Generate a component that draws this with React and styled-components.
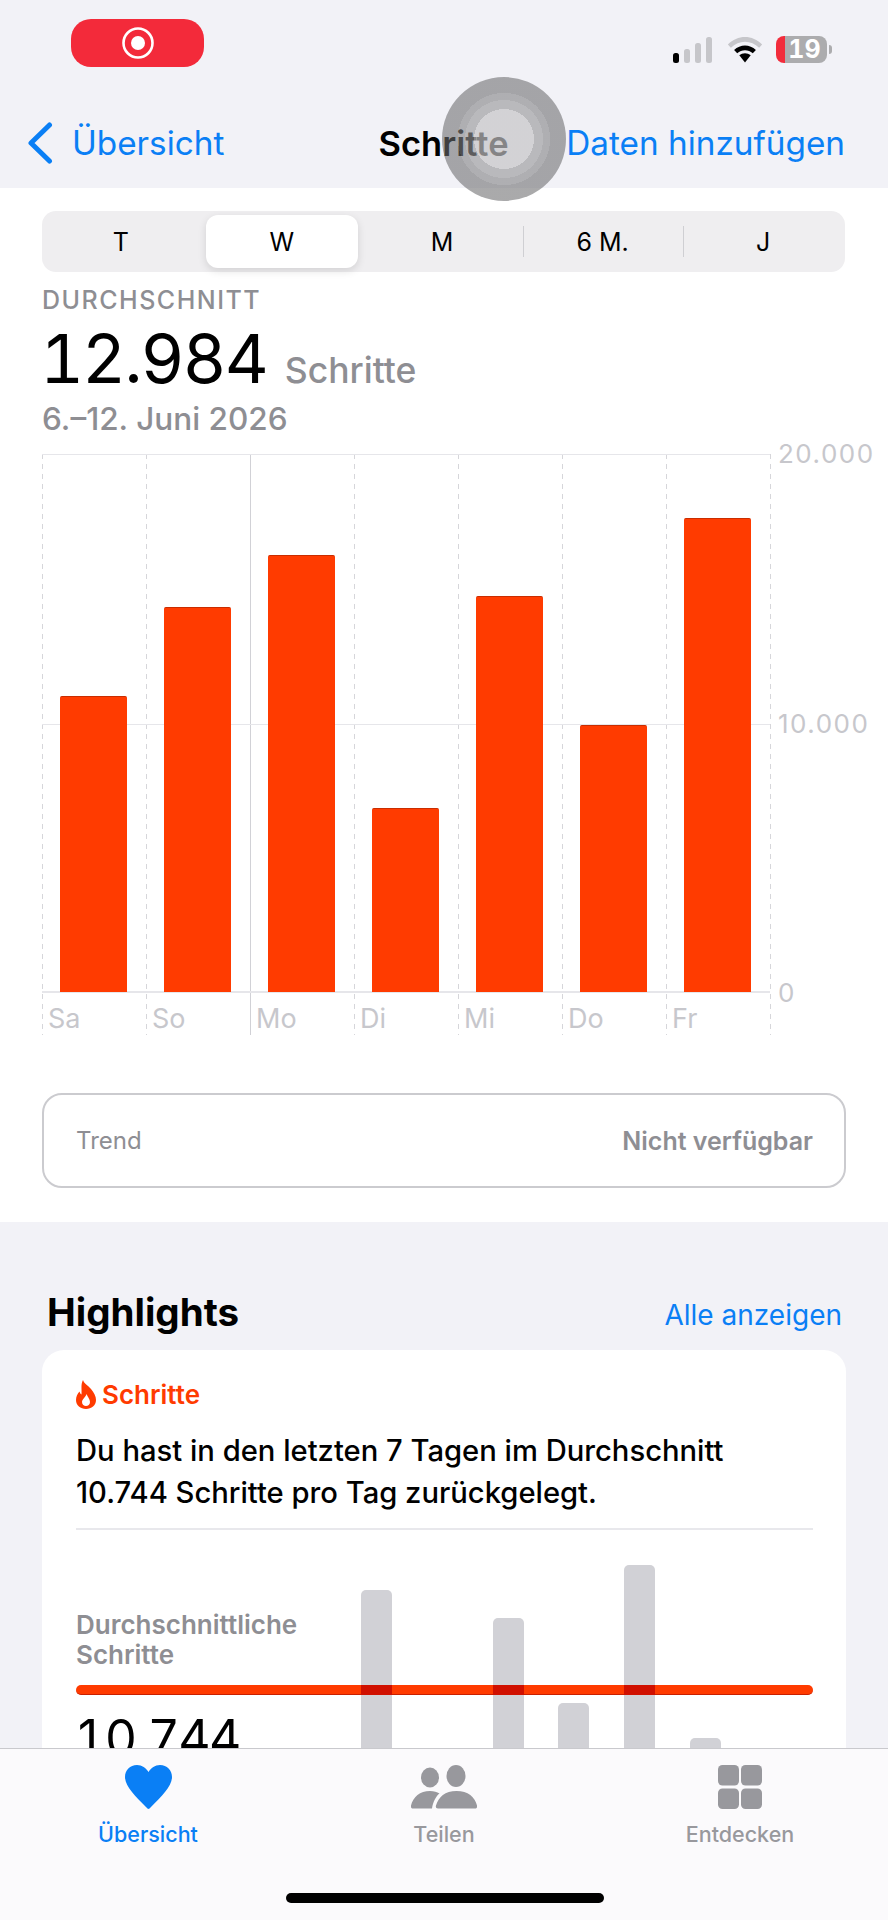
import React from 'react';
import styled, { createGlobalStyle } from 'styled-components';

const Global = createGlobalStyle`
  html, body { margin: 0; padding: 0; background: #f2f2f7; }
  body { font-family: Inter, "Liberation Sans", sans-serif; -webkit-font-smoothing: antialiased; }
`;

const BLUE = '#0a7ff5';
const ORANGE = '#ff3b00';
const GRAY = '#8e8e93';
const AXIS = '#c7c7cc';

const Page = styled.div`
  position: relative;
  width: 888px;
  height: 1920px;
  overflow: hidden;
  background: #f2f2f7;
`;

/* status bar */
const StatusBar = styled.div`
  height: 100px;
  box-sizing: border-box;
  padding: 19px 56px 0 71px;
  display: flex;
  justify-content: space-between;
  align-items: flex-start;
`;
const RecordPill = styled.div`
  width: 133px;
  height: 48px;
  border-radius: 20px;
  background: #f32a3a;
  display: flex;
  align-items: center;
  justify-content: center;
`;
const StatusIcons = styled.div`
  display: flex;
  align-items: flex-end;
  margin-top: 17px;
  height: 27px;
`;
const Signal = styled.div`
  display: flex;
  align-items: flex-end;
  gap: 4.5px;
  margin-right: 15px;
`;
const SignalBar = styled.span`
  width: 6.5px;
  height: ${p => p.$h}px;
  border-radius: 2.5px;
  background: ${p => (p.$on ? '#000' : '#c6c6ca')};
`;
const Battery = styled.div`
  width: 51px;
  height: 27px;
  margin-left: 13px;
  border-radius: 8px;
  background: linear-gradient(to right, #f22c3b 0 9px, #acacae 9px);
  color: #fff;
  font-size: 25px;
  font-weight: 700;
  line-height: 27px;
  text-align: center;
  padding-left: 6px;
  box-sizing: border-box;
  font-feature-settings: 'tnum';
`;
const BatteryNub = styled.span`
  width: 3px;
  height: 9px;
  margin: 0 0 9px 2px;
  border-radius: 0 3px 3px 0;
  background: #acacae;
`;

/* nav */
const NavBar = styled.div`
  height: 88px;
  box-sizing: border-box;
  padding: 0 43px 2px 27px;
  display: flex;
  align-items: center;
  font-size: 33.3px;
`;
const BackLink = styled.div`
  display: flex;
  align-items: center;
  gap: 19px;
  color: ${BLUE};
  width: 352px;
`;
const NavTitle = styled.div`
  font-size: 34.5px;
  font-weight: 600;
  color: #000;
  width: 188px;
`;
const NavAction = styled.div`
  color: ${BLUE};
  margin-left: auto;
  white-space: nowrap;
`;
const TouchDisc = styled.div`
  position: absolute;
  left: 442px;
  top: 77px;
  width: 124px;
  height: 124px;
  border-radius: 50%;
  background: radial-gradient(circle at 50% 50%,
    rgba(196, 195, 197, 0.68) 0 30px,
    rgba(150, 150, 152, 0.62) 30px 39px,
    rgba(130, 130, 132, 0.6) 39px 46px,
    rgba(108, 108, 110, 0.58) 46px);
`;

/* white section */
const Section = styled.section`
  background: #fff;
  height: 1034px;
  box-sizing: border-box;
  padding: 23px 42px 0 42px;
`;
const Segmented = styled.div`
  height: 61px;
  margin-right: 1px;
  box-sizing: border-box;
  padding: 4px 0;
  border-radius: 14px;
  background: #efeef0;
  display: grid;
  grid-template-columns: repeat(5, 1fr);
`;
const Segment = styled.div`
  position: relative;
  display: flex;
  align-items: center;
  justify-content: center;
  padding-right: 3px;
  font-size: 25px;
  color: #000;
  border-radius: 12px;
  ${p => p.$active && 'margin: 0 5px 0 3px; padding: 0; background: #fff; box-shadow: 0 3px 8px rgba(0,0,0,.12);'}
  ${p => p.$divider && `
    &::before {
      content: '';
      position: absolute;
      left: -1px;
      top: 11px;
      bottom: 11px;
      width: 1px;
      background: #cfcfd3;
    }
  `}
`;
const Kicker = styled.div`
  margin-top: 14px;
  font-size: 25px;
  line-height: 28px;
  letter-spacing: 1.5px;
  font-weight: 500;
  color: ${GRAY};
`;
const StatRow = styled.div`
  display: flex;
  align-items: baseline;
  gap: 18px;
  height: 88px;
  line-height: 88px;
  color: ${GRAY};
  font-size: 35.5px;
  font-weight: 500;
`;
const StatValue = styled.span`
  margin-left: -2px;
  font-size: 68px;
  color: #000;
  font-weight: 400;
  letter-spacing: -2px;
  font-feature-settings: 'tnum';
`;
const DateRange = styled.div`
  font-size: 31.5px;
  line-height: 34px;
  font-weight: 500;
  color: ${GRAY};
`;

/* chart */
const Chart = styled.div`
  position: relative;
  width: 728px;
  margin-top: 18px;
  display: grid;
  grid-template-columns: repeat(7, 1fr);
`;
const DASHES = 'repeating-linear-gradient(to bottom, #d6d6da 0 5px, transparent 5px 10px)';
const Day = styled.div`
  background: ${p => (p.$solid ? 'linear-gradient(#d1d1d6, #d1d1d6)' : DASHES)} left top / 1px 100% no-repeat;
`;
const BarSlot = styled.div`
  position: relative;
  z-index: 1;
  height: 538px;
  padding-left: 18px;
  display: flex;
  align-items: flex-end;
`;
const Bar = styled.div`
  width: 67px;
  box-sizing: border-box;
  border-top: 1.5px solid #c92d00;
  border-radius: 2px 2px 0 0;
  background: ${ORANGE};
`;
const DayLabel = styled.div`
  height: 43px;
  box-sizing: border-box;
  padding: 12px 0 0 6px;
  font-size: 27px;
  line-height: 30px;
  color: ${AXIS};
`;
const RightEdge = styled.div`
  position: absolute;
  top: 0;
  bottom: 0;
  left: 100%;
  width: 1px;
  background: ${DASHES};
`;
const GridLine = styled.div`
  position: absolute;
  left: 0;
  right: 0;
  top: ${p => p.$top}px;
  height: ${p => p.$weight || 1}px;
  background: #e6e6ea;
`;
const AxisLabel = styled.span`
  position: absolute;
  left: calc(100% + 8px);
  top: ${p => p.$offset || -15}px;
  font-size: 26px;
  letter-spacing: 1.5px;
  line-height: 30px;
  color: ${AXIS};
  white-space: nowrap;
`;

const TrendBox = styled.div`
  margin-top: 58px;
  height: 95px;
  box-sizing: border-box;
  padding: 0 31px 0 32px;
  border: 2px solid #cbcbcf;
  border-radius: 20px;
  display: flex;
  align-items: center;
  justify-content: space-between;
  font-size: 24px;
  color: ${GRAY};
`;
const TrendValue = styled.span`
  font-size: 25px;
  font-weight: 600;
`;

/* highlights */
const HighlightHead = styled.div`
  height: 128px;
  box-sizing: border-box;
  padding: 66px 46px 0 47px;
  display: flex;
  justify-content: space-between;
  align-items: flex-start;
`;
const HighlightTitle = styled.h2`
  margin: 0;
  font-size: 38.5px;
  line-height: 48px;
  font-weight: 700;
  color: #000;
`;
const ShowAll = styled.a`
  font-size: 28px;
  line-height: 48px;
  margin-top: 3px;
  color: ${BLUE};
`;
const Card = styled.article`
  margin: 0 42px;
  height: 600px;
  box-sizing: border-box;
  padding: 30px 33px 0 34px;
  background: #fff;
  border-radius: 22px;
`;
const CardTag = styled.div`
  display: flex;
  align-items: center;
  gap: 6px;
  height: 29px;
  font-size: 26px;
  font-weight: 600;
  color: ${ORANGE};
`;
const CardText = styled.p`
  margin: 21px 0 0;
  font-size: 29.2px;
  line-height: 42px;
  font-weight: 500;
  color: #000;
  white-space: nowrap;
`;
const Rule = styled.div`
  height: 2px;
  margin-top: 14px;
  background: #e8e8ec;
`;
const Insight = styled.div`
  position: relative;
  margin-top: 34px;
  height: 250px;
  display: grid;
  grid-template-columns: 285px 1fr;
`;
const InsightLabel = styled.div`
  margin-top: 46px;
  font-size: 26px;
  line-height: 30px;
  font-weight: 600;
  color: ${GRAY};
`;
const InsightValue = styled.div`
  margin: 43px 0 0 -2px;
  font-size: 50px;
  line-height: 50px;
  letter-spacing: -1.6px;
  color: #000;
  font-feature-settings: 'tnum';
`;
const MiniBars = styled.div`
  display: grid;
  grid-template-columns: repeat(7, 65.8px);
  height: 250px;
  align-items: end;
`;
const MiniBar = styled.div`
  position: relative;
  width: 31px;
  border-radius: 5px 5px 0 0;
  background: #d1d1d6;
  ${p => p.$crossed && `
    &::after {
      content: '';
      position: absolute;
      left: 0;
      right: 0;
      bottom: 119px;
      height: 10px;
      background: #d01000;
      z-index: 2;
    }
  `}
`;
const AverageLine = styled.div`
  position: absolute;
  z-index: 1;
  left: 0;
  right: 0;
  top: 121px;
  height: 10px;
  box-sizing: border-box;
  border-bottom: 1.5px solid #c92000;
  border-radius: 5px;
  background: ${ORANGE};
`;

/* tab bar */
const TabBar = styled.nav`
  position: absolute;
  z-index: 3;
  left: 0;
  right: 0;
  bottom: 0;
  height: 172px;
  box-sizing: border-box;
  padding-top: 16px;
  border-top: 1.5px solid #c9c9cd;
  background: #fbfafc;
  display: grid;
  grid-template-columns: 296px 296px 296px;
`;
const Tab = styled.div`
  display: flex;
  flex-direction: column;
  align-items: center;
  color: ${p => (p.$active ? BLUE : '#98989d')};
  font-size: 21.5px;
  font-weight: 500;
  line-height: 24px;
`;
const TabIcon = styled.div`
  height: 44px;
  margin-bottom: 13px;
  display: flex;
  align-items: center;
`;
const HomeIndicator = styled.div`
  position: absolute;
  left: 286px;
  bottom: 17px;
  width: 318px;
  height: 10px;
  border-radius: 5px;
  background: #000;
`;

const weekSteps = [
  { day: 'Sa', height: 296 },
  { day: 'So', height: 385 },
  { day: 'Mo', height: 437, solid: true },
  { day: 'Di', height: 184 },
  { day: 'Mi', height: 396 },
  { day: 'Do', height: 267 },
  { day: 'Fr', height: 474 },
];
const miniHeights = [224, 0, 196, 111, 249, 76, 0];

function RecordIcon() {
  return (
    <svg width="34" height="34" viewBox="0 0 34 34">
      <circle cx="17" cy="17" r="14.5" fill="none" stroke="#fff" strokeWidth="2.6" />
      <circle cx="17" cy="17" r="7" fill="#fff" />
    </svg>
  );
}

function WifiIcon() {
  return (
    <svg width="36" height="27" viewBox="0 0 34 26">
      <path d="M0.5 8.2C9.8-1.6 24.2-1.6 33.5 8.2L30.6 11.3C23 3.500 11 3.500 3.400 11.300Z" fill="#c6c6ca" />
      <path d="M6.500 13.400C12.400 7.600 21.600 7.600 27.500 13.400L24.500 16.500C20.200 12.700 13.800 12.700 9.500 16.500Z" fill="#000" />
      <path d="M11.500 18.600C14.600 15.900 19.400 15.900 22.500 18.600L17 25.500Z" fill="#000" />
    </svg>
  );
}

function FlameIcon() {
  return (
    <svg width="20" height="29" viewBox="0 0 20 29">
      <path
        fillRule="evenodd"
        fill={ORANGE}
        d="M7 0C8 4 12 5 15 9 18 13 20 16 20 20 20 25.500 15.500 29 10 29 4.500 29 0 25.500 0 20 0 16.500 1.500 13.500 3.500 11.500 4 13 4.500 14 5.500 14.500 6 9.500 4.500 4.500 7 0ZM10.500 14C10 17 6 19 6 22 6 24.500 8 26 10 26 12 26 14 24.500 14 22 14 19 11.500 17 10.500 14Z"
      />
    </svg>
  );
}

function HeartIcon() {
  return (
    <svg width="47" height="44" viewBox="0 0 47 44">
      <path
        fill="currentColor"
        d="M23.5 44C23 44 22 43 21 42 10 31 0 21 0 12 0 5 5 0 12 0 17 0 21 3 23.5 7 26 3 30 0 35 0 42 0 47 5 47 12 47 21 37 31 26 42 25 43 24 44 23.5 44Z"
      />
    </svg>
  );
}

function PeopleIcon() {
  return (
    <svg width="66" height="44" viewBox="0 0 66 44" fill="currentColor">
      <ellipse cx="19" cy="12.5" rx="9" ry="10" />
      <ellipse cx="45" cy="11" rx="9.5" ry="11" />
      <path d="M27 43.5c-2 0-2.5-1.5-2-3C27.500 32 34 26 45.500 26S64 32 66 40.500c.4 2-.5 3-2 3Z" />
      <path d="M2 43.500c-1.500 0-2.500-1-2-3C2 32 9 26 19 26c4 0 7 1 9.500 2.500C25 31 22 37 21 43.500Z" />
    </svg>
  );
}

function GridIcon() {
  return (
    <svg width="44" height="44" viewBox="0 0 44 44" fill="currentColor">
      <rect x="0" y="0" width="21" height="20.500" rx="4.500" />
      <rect x="23" y="0" width="21" height="20.500" rx="4.500" />
      <rect x="0" y="23.500" width="21" height="20.500" rx="4.500" />
      <rect x="23" y="23.500" width="21" height="20.500" rx="4.500" />
    </svg>
  );
}

function Chevron() {
  return (
    <svg width="26" height="42" viewBox="0 0 26 42">
      <path d="M22.500 3 4 21l18.500 18" fill="none" stroke={BLUE} strokeWidth="5" strokeLinecap="round" strokeLinejoin="round" />
    </svg>
  );
}

export default function App() {
  return (
    <Page>
      <Global />
      <StatusBar>
        <RecordPill><RecordIcon /></RecordPill>
        <StatusIcons>
          <Signal>
            <SignalBar $on $h={10} />
            <SignalBar $h={14} />
            <SignalBar $h={20} />
            <SignalBar $h={26} />
          </Signal>
          <WifiIcon />
          <Battery>19</Battery>
          <BatteryNub />
        </StatusIcons>
      </StatusBar>

      <NavBar>
        <BackLink><Chevron />Übersicht</BackLink>
        <NavTitle>Schritte</NavTitle>
        <NavAction>Daten hinzufügen</NavAction>
      </NavBar>

      <Section>
        <Segmented>
          <Segment>T</Segment>
          <Segment $active>W</Segment>
          <Segment>M</Segment>
          <Segment $divider>6 M.</Segment>
          <Segment $divider>J</Segment>
        </Segmented>

        <Kicker>DURCHSCHNITT</Kicker>
        <StatRow><StatValue>12.984</StatValue>Schritte</StatRow>
        <DateRange>6.–12. Juni 2026</DateRange>

        <Chart>
          <GridLine $top={0}><AxisLabel>20.000</AxisLabel></GridLine>
          <GridLine $top={270}><AxisLabel>10.000</AxisLabel></GridLine>
          <GridLine $top={537} $weight={2}><AxisLabel $offset={-13}>0</AxisLabel></GridLine>
          {weekSteps.map(item => (
            <Day key={item.day} $solid={item.solid}>
              <BarSlot><Bar style={{ height: item.height }} /></BarSlot>
              <DayLabel>{item.day}</DayLabel>
            </Day>
          ))}
          <RightEdge />
        </Chart>

        <TrendBox>
          <span>Trend</span>
          <TrendValue>Nicht verfügbar</TrendValue>
        </TrendBox>
      </Section>

      <HighlightHead>
        <HighlightTitle>Highlights</HighlightTitle>
        <ShowAll>Alle anzeigen</ShowAll>
      </HighlightHead>

      <Card>
        <CardTag><FlameIcon />Schritte</CardTag>
        <CardText>
          Du hast in den letzten 7 Tagen im Durchschnitt<br />
          10.744 Schritte pro Tag zurückgelegt.
        </CardText>
        <Rule />
        <Insight>
          <div>
            <InsightLabel>Durchschnittliche<br />Schritte</InsightLabel>
            <InsightValue>10.744</InsightValue>
          </div>
          <MiniBars>
            {miniHeights.map((h, i) => (
              <MiniBar key={i} $crossed={h > 130} style={{ height: h }} />
            ))}
          </MiniBars>
          <AverageLine />
        </Insight>
      </Card>

      <TouchDisc />

      <TabBar>
        <Tab $active><TabIcon><HeartIcon /></TabIcon>Übersicht</Tab>
        <Tab><TabIcon><PeopleIcon /></TabIcon>Teilen</Tab>
        <Tab><TabIcon><GridIcon /></TabIcon>Entdecken</Tab>
        <HomeIndicator />
      </TabBar>
    </Page>
  );
}
